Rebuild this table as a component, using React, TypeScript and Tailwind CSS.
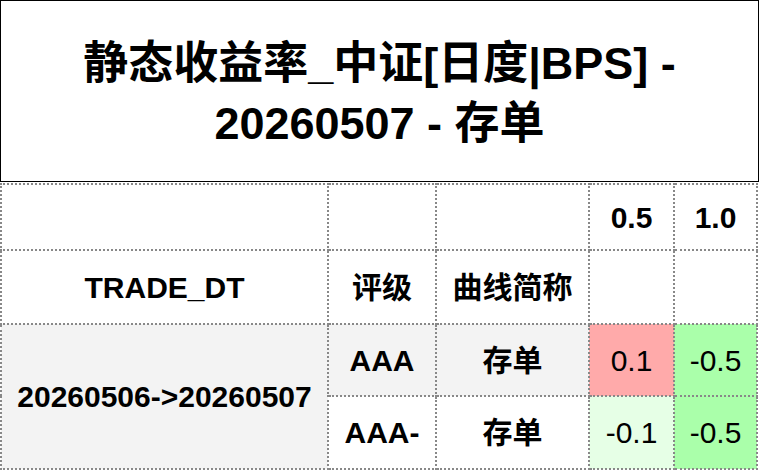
import React from "react";

const cellBorder = "border-2 border-dotted border-[#888888]";

export default function App() {
  return (
    <div
      className="w-[760px] h-[471px] bg-white text-black overflow-hidden"
      style={{ fontFamily: '"Liberation Sans", Arial, "Noto Sans CJK SC", sans-serif' }}
    >
      <div className="w-[759px] h-[182px] border border-black flex items-center justify-center pt-[5px]">
        <div className="w-[640px] text-center font-bold text-[45px] leading-[60px]">
          静态收益率_中证[日度|BPS] - 20260507 - 存单
        </div>
      </div>
      <table className="mt-px border-collapse table-fixed w-[758px] text-[30px]">
        <colgroup>
          <col className="w-[327px]" />
          <col className="w-[108px]" />
          <col className="w-[153px]" />
          <col className="w-[85px]" />
          <col className="w-[83px]" />
        </colgroup>
        <tbody>
          <tr className="h-[66px]">
            <td className={cellBorder}></td>
            <td className={cellBorder}></td>
            <td className={cellBorder}></td>
            <td className={`${cellBorder} text-center font-bold p-0`}>0.5</td>
            <td className={`${cellBorder} text-center font-bold p-0`}>1.0</td>
          </tr>
          <tr className="h-[74px]">
            <td className={`${cellBorder} text-center font-bold p-0`}>TRADE_DT</td>
            <td className={`${cellBorder} text-center font-bold p-0`}>评级</td>
            <td className={`${cellBorder} text-center font-bold p-0`}>曲线简称</td>
            <td className={cellBorder}></td>
            <td className={cellBorder}></td>
          </tr>
          <tr className="h-[72px]">
            <td rowSpan={2} className={`${cellBorder} bg-[#f3f3f3] text-center font-bold p-0`}>
              20260506-&gt;20260507
            </td>
            <td className={`${cellBorder} bg-[#f3f3f3] text-center font-bold p-0`}>AAA</td>
            <td className={`${cellBorder} bg-[#f3f3f3] text-center font-bold p-0`}>存单</td>
            <td className={`${cellBorder} bg-[#ffaaaa] text-center p-0`}>0.1</td>
            <td className={`${cellBorder} bg-[#aaffaa] text-center p-0`}>-0.5</td>
          </tr>
          <tr className="h-[73px]">
            <td className={`${cellBorder} bg-white text-center font-bold p-0`}>AAA-</td>
            <td className={`${cellBorder} bg-white text-center font-bold p-0`}>存单</td>
            <td className={`${cellBorder} bg-[#e6ffe6] text-center p-0`}>-0.1</td>
            <td className={`${cellBorder} bg-[#aaffaa] text-center p-0`}>-0.5</td>
          </tr>
        </tbody>
      </table>
    </div>
  );
}
